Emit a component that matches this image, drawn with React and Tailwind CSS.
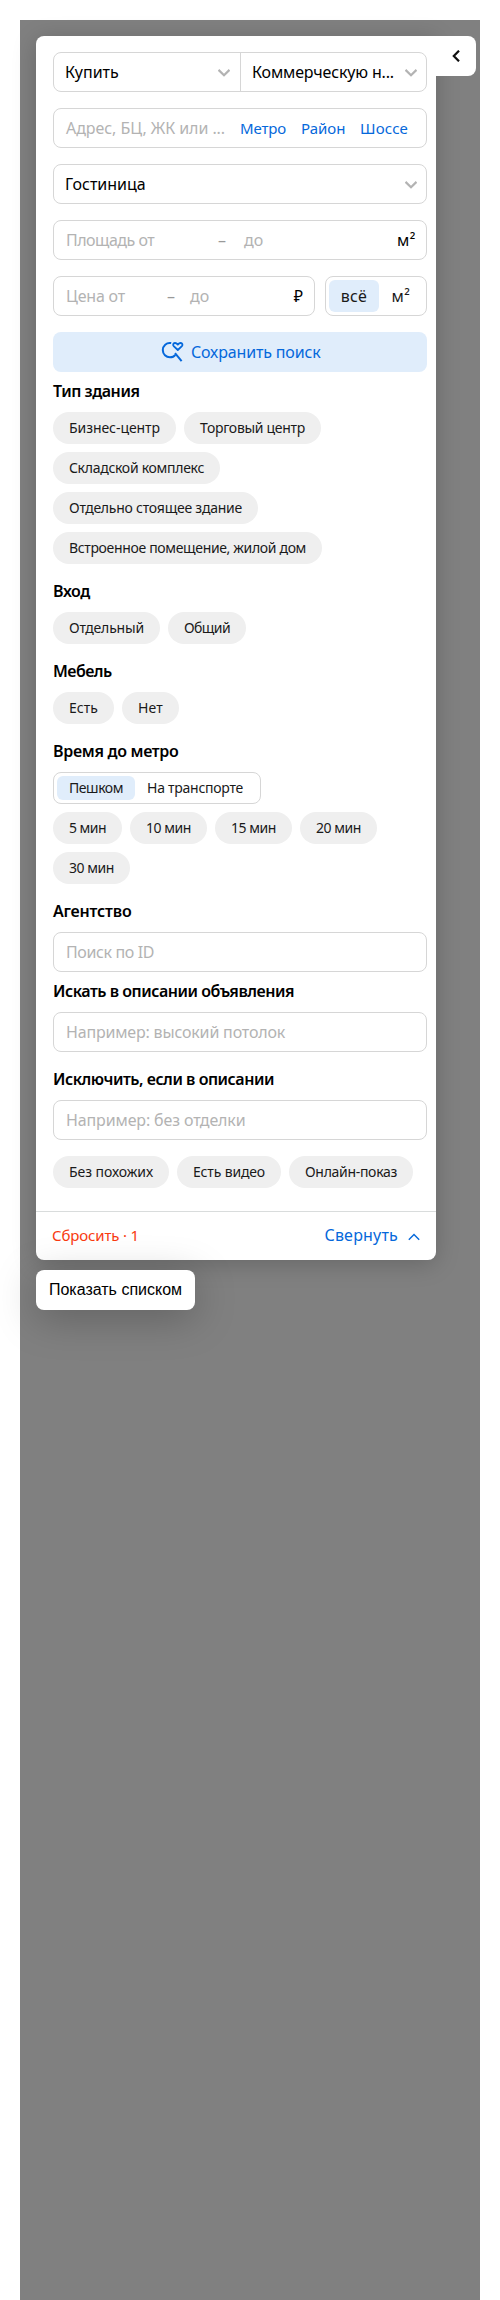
function Chevron({ className = "mt-0.5 text-[#b3b3b3]", up = false, thin = false }) {
  return (
    <svg viewBox="0 0 12 8" className={`h-2 w-3 shrink-0 ${className}`} fill="none" stroke="currentColor" strokeWidth={thin ? 1.4 : 2.2}>
      <path d={up ? "M0.8 6.8 6 1.6l5.2 5.2" : "M0.5 0.9 6 6.2l5.5-5.3"} />
    </svg>
  );
}

function SearchHeart() {
  return (
    <svg viewBox="0 0 24 24" className="h-6 w-6 shrink-0" fill="none" stroke="#0568db" strokeWidth="2" strokeLinejoin="round">
      <path d="M11.2 3.1C6.4 2.2 2.8 5.8 2.8 10c0 4.300 3.300 7.300 7.200 7.300 2.200 0 4.200-.9 5.400-2.500" />
      <path d="M15 13.200 21.600 21.100" />
      <path d="M17.800 10 13.700 6.200C12.500 4.900 13.300 3.100 14.900 3c1.300-.1 2.200.8 2.900 1.600.7-.8 1.600-1.700 2.900-1.600 1.600.1 2.400 1.900 1.200 3.200Z" strokeWidth="1.800" />
    </svg>
  );
}

function Field({ className = "", children }) {
  return (
    <div className={`flex h-10 items-center rounded-lg border border-[#d6d6d6] bg-white text-[16px] leading-5 whitespace-nowrap ${className}`}>
      {children}
    </div>
  );
}

function Title({ className = "", children }) {
  return <h3 className={`h-5 text-[16px] leading-[19px] font-semibold whitespace-nowrap text-black ${className}`}>{children}</h3>;
}

function Chips({ items, className = "" }) {
  return (
    <div className={`flex flex-wrap gap-2 ${className}`}>
      {items.map(([label, size]) => (
        <button key={label} className={`flex h-8 items-center justify-center rounded-full bg-[#efefef] text-[14px] leading-[18px] whitespace-nowrap text-[#1a1a1a] ${size}`}>
          {label}
        </button>
      ))}
    </div>
  );
}

const buildingTypes = [
  ["Бизнес-центр", "w-[123px] tracking-[-0.06px]"],
  ["Торговый центр", "w-[137px] tracking-[-0.29px]"],
  ["Складской комплекс", "w-[167px] tracking-[-0.29px]"],
  ["Отдельно стоящее здание", "w-[205px] tracking-[-0.24px]"],
  ["Встроенное помещение, жилой дом", "w-[269px] tracking-[-0.34px]"],
];
const entrances = [
  ["Отдельный", "w-[107px] tracking-[-0.18px]"],
  ["Общий", "w-[78px] tracking-[-0.59px]"],
];
const furniture = [
  ["Есть", "w-[61px]"],
  ["Нет", "w-[57px] tracking-[0.1px]"],
];
const metroTimes = [
  ["5 мин", "w-[69px] tracking-[-0.5px]"],
  ["10 мин", "w-[77px] tracking-[-0.45px]"],
  ["15 мин", "w-[77px] tracking-[-0.45px]"],
  ["20 мин", "w-[77px] tracking-[-0.45px]"],
  ["30 мин", "w-[77px] tracking-[-0.45px]"],
];
const extras = [
  ["Без похожих", "w-[116px] tracking-[-0.06px]"],
  ["Есть видео", "w-[104px] tracking-[-0.16px]"],
  ["Онлайн-показ", "w-[124px] tracking-[-0.3px]"],
];

export default function App() {
  return (
    <div className="h-[2300px] w-[500px] bg-white px-5 pt-5 font-['Noto_Sans',sans-serif] text-black">
      <div className="h-[2280px] w-[460px] bg-[#808080] pt-4 pl-4">
        <div className="flex items-start">
          <div className="h-[1224px] w-[400px] shrink-0 rounded-lg rounded-tr-none bg-white shadow-[0_4px_24px_rgba(0,0,0,0.2)]">
            <div className="flex h-[1175px] flex-col pt-4 pl-[17px]">
              <Field className="w-[374px] shrink-0">
                <div className="flex h-full w-[187px] items-center justify-between border-r border-[#d6d6d6] pr-[10px] pb-px pl-[11px]">
                  <span>Купить</span>
                  <Chevron />
                </div>
                <div className="flex flex-1 items-center justify-between pr-[9px] pb-px pl-[11px]">
                  <span className="tracking-[-0.15px]">Коммерческую н...</span>
                  <Chevron />
                </div>
              </Field>

              <Field className="mt-4 w-[374px] shrink-0 pl-3">
                <span className="w-[174px] tracking-[-0.06px] text-[#b3b3b3]">Адрес, БЦ, ЖК или ...</span>
                <span className="flex gap-[15px] text-[15px] text-[#0568db]">
                  <a className="w-[46px] tracking-[-0.15px]">Метро</a>
                  <a className="w-[44px]">Район</a>
                  <a className="tracking-[0.16px]">Шоссе</a>
                </span>
              </Field>

              <Field className="mt-4 w-[374px] shrink-0 justify-between pr-[9px] pb-px pl-[11px]">
                <span>Гостиница</span>
                <Chevron />
              </Field>

              <Field className="mt-4 w-[374px] shrink-0 pr-[10px] pl-3 text-[#b3b3b3]">
                <span className="w-[152px] tracking-[-0.5px]">Площадь от</span>
                <span className="w-[26px] text-[#999]">–</span>
                <span className="flex-1">до</span>
                <span className="tracking-[0.55px] text-black">м²</span>
              </Field>

              <div className="mt-4 flex shrink-0 gap-2.5">
                <Field className="w-[262px] pr-[11px] pl-3 text-[#b3b3b3]">
                  <span className="w-[101px] tracking-[-0.19px]">Цена от</span>
                  <span className="w-[23px] text-[#999]">–</span>
                  <span className="flex-1">до</span>
                  <span className="text-black">₽</span>
                </Field>
                <Field className="w-[102px] px-[3px] text-[#1a1a1a]">
                  <span className="flex h-8 w-[50px] items-center justify-center rounded-md bg-[#e0edfb] pb-px tracking-[0.3px]">всё</span>
                  <span className="flex h-8 flex-1 items-center justify-center pb-px tracking-[0.55px]">м²</span>
                </Field>
              </div>

              <button className="mt-4 flex h-10 w-[374px] shrink-0 items-center rounded-lg bg-[#e0edfb] pl-[107px] text-[16px] whitespace-nowrap text-[#0568db]">
                <SearchHeart />
                <span className="ml-[7px] pb-px tracking-[-0.15px]">Сохранить поиск</span>
              </button>

              <Title className="mt-[10px] tracking-[-0.45px]">Тип здания</Title>
              <Chips items={buildingTypes} className="mt-[10px] w-[374px]" />

              <Title className="mt-[18px] tracking-[-0.38px]">Вход</Title>
              <Chips items={entrances} className="mt-[10px]" />

              <Title className="mt-[18px] tracking-[-0.57px]">Мебель</Title>
              <Chips items={furniture} className="mt-[10px]" />

              <Title className="mt-[18px] tracking-[-0.31px]">Время до метро</Title>
              <div className="mt-[10px] flex h-8 w-[208px] shrink-0 items-center rounded-lg border border-[#d6d6d6] px-[3px] text-[14px] leading-[18px] whitespace-nowrap text-[#1a1a1a]">
                <span className="flex h-6 w-[78px] items-center justify-center rounded-md bg-[#e0edfb] tracking-[-0.45px]">Пешком</span>
                <span className="pl-3 tracking-[-0.26px]">На транспорте</span>
              </div>
              <Chips items={metroTimes} className="mt-2 w-[374px]" />

              <Title className="mt-[18px] tracking-[-0.19px]">Агентство</Title>
              <Field className="mt-[10px] w-[374px] shrink-0 pl-3 tracking-[-0.38px] text-[#b3b3b3]">Поиск по ID</Field>

              <Title className="mt-[10px] tracking-[-0.47px]">Искать в описании объявления</Title>
              <Field className="mt-[10px] w-[374px] shrink-0 pl-3 tracking-[-0.18px] text-[#b3b3b3]">Например: высокий потолок</Field>

              <Title className="mt-[18px] tracking-[-0.47px]">Исключить, если в описании</Title>
              <Field className="mt-[10px] w-[374px] shrink-0 pl-3 tracking-[-0.13px] text-[#b3b3b3]">Например: без отделки</Field>

              <Chips items={extras} className="mt-4" />
            </div>

            <div className="flex h-[49px] items-center justify-between border-t border-[#d9dcdc] pr-4 pb-px pl-4">
              <button className="text-[15px] tracking-[-0.15px] text-[#f93a10]">Сбросить · 1</button>
              <button className="flex items-center gap-[10px] text-[16px] tracking-[0.2px] text-[#0568db]">
                <span className="pb-px">Свернуть</span>
                <Chevron up thin className="mt-0.5 text-[#0568db]" />
              </button>
            </div>
          </div>

          <button className="relative flex h-10 w-10 shrink-0 items-center justify-center rounded-r-lg bg-white pr-px">
            <svg viewBox="0 0 8 12" className="h-3 w-2" fill="none" stroke="#111" strokeWidth="2.2">
              <path d="M7 0.700 1.800 6 7 11.300" />
            </svg>
          </button>
        </div>

        <button className="relative mt-[10px] flex h-10 w-[159px] items-center justify-center rounded-lg bg-white pb-px font-['Liberation_Sans',sans-serif] text-[16px] whitespace-nowrap shadow-[0_8px_40px_rgba(0,0,0,0.25)]">
          Показать списком
        </button>
      </div>
    </div>
  );
}
